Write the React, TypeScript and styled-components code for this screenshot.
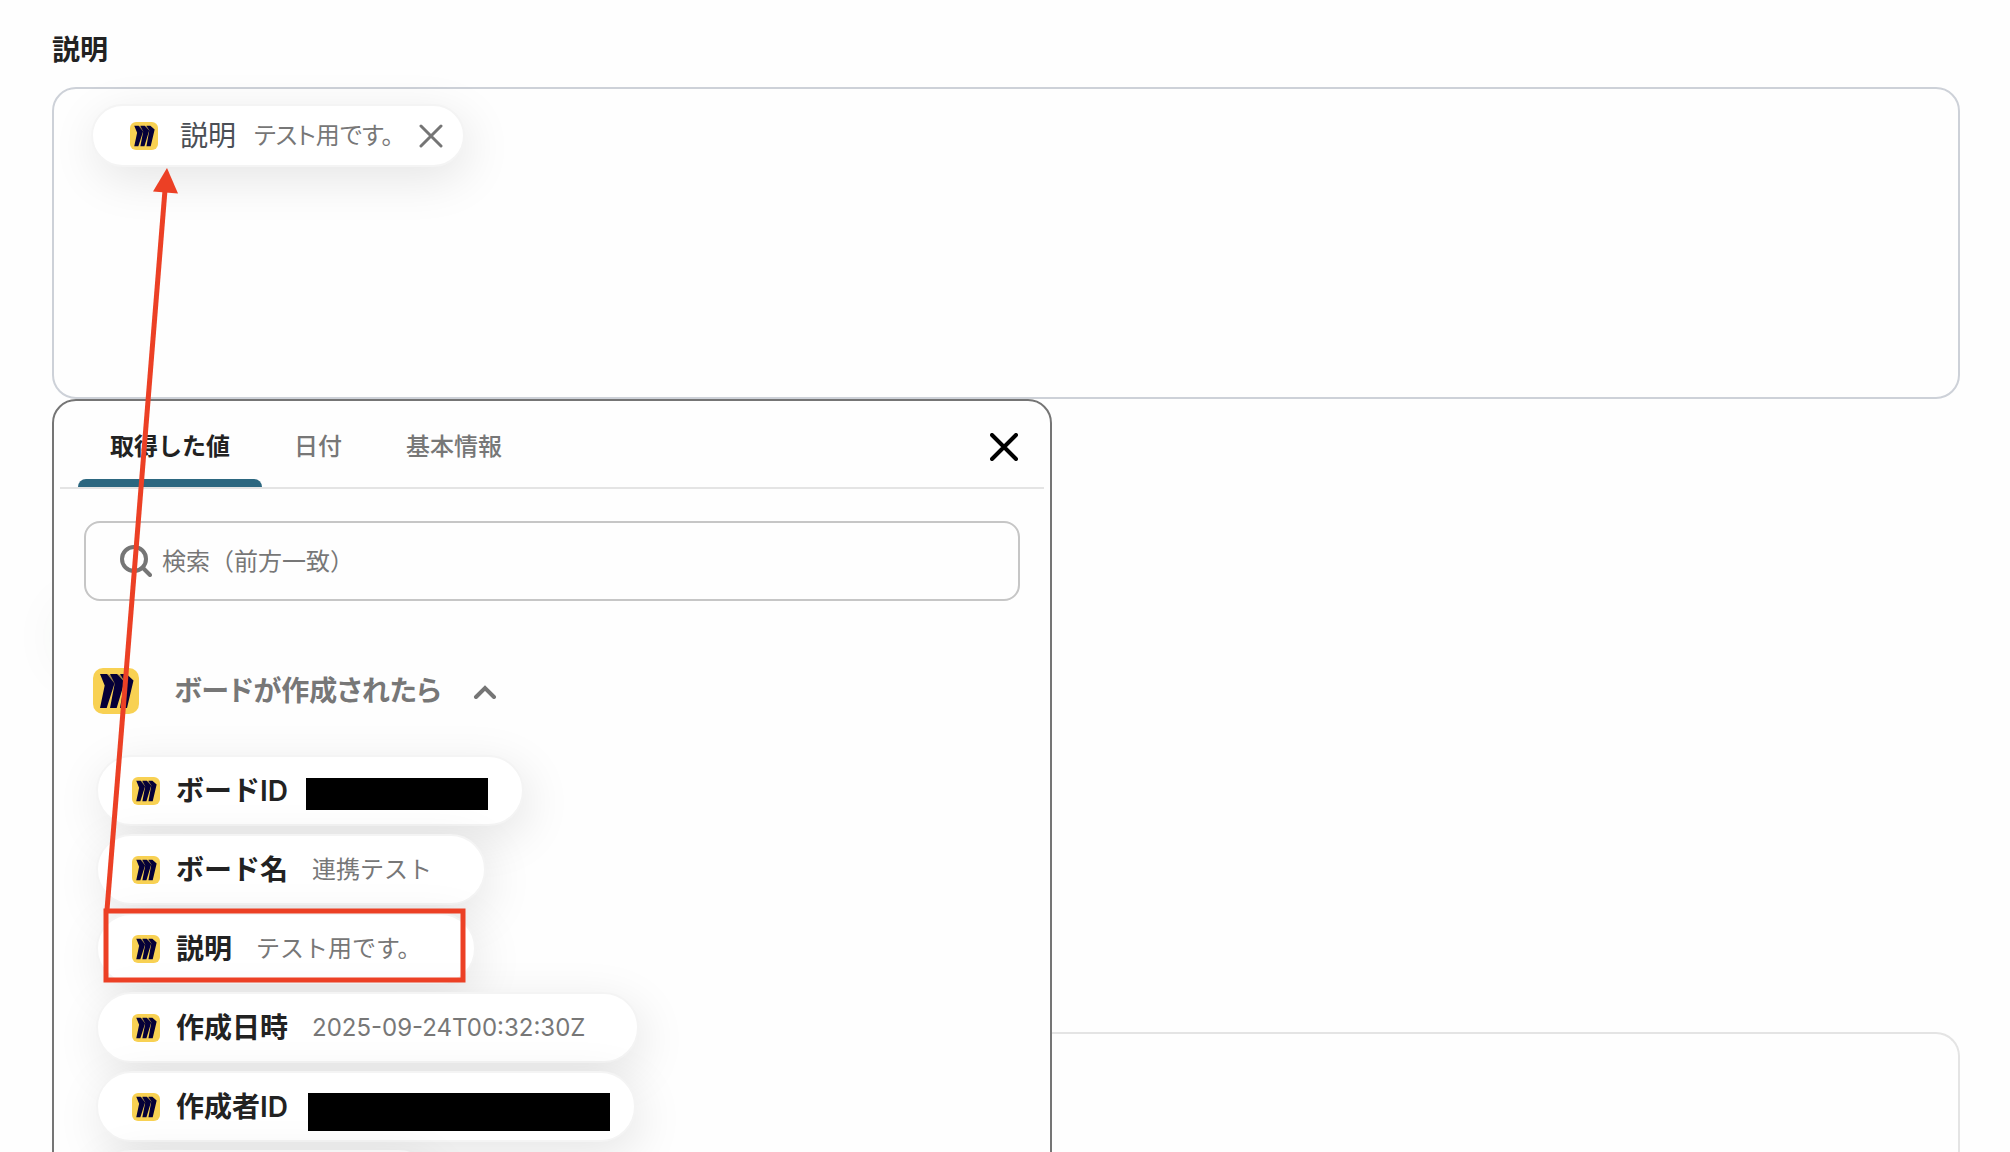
import React from "react";
import styled, { createGlobalStyle } from "styled-components";

const GlobalStyle = createGlobalStyle`
  *, *::before, *::after { box-sizing: border-box; }
  body {
    margin: 0;
    background: #fefefe;
    color: #222;
    font-family: Inter, "Noto Sans CJK JP", sans-serif;
    font-size: 24px;
    line-height: 36px;
  }
  button, input { font: inherit; color: inherit; }
`;

const Page = styled.main`
  position: relative;
  display: flex;
  flex-direction: column;
  height: 100vh;
  padding: 30px 50px 0 52px;
  overflow: hidden;
`;

const FieldLabel = styled.h2`
  margin: 0 0 17px;
  font-size: 28px;
  font-weight: 600;
  line-height: 40px;
`;

const FieldAnchor = styled.div`
  position: relative;

  &::before {
    content: "";
    position: absolute;
    top: calc(100% + 210px);
    left: 8px;
    width: 200px;
    height: 56px;
    border-radius: 28px;
    box-shadow: 0 0 56px rgba(40, 80, 70, 0.08);
  }
`;

const FieldBox = styled.div`
  display: flex;
  align-items: flex-start;
  min-height: 312px;
  padding: 15px 37px;
  border: 2px solid #cdd1d8;
  border-radius: 24px;
`;

const NextBox = styled.section`
  flex: 1 0 200px;
  margin-top: 633px;
  border: 2px solid #e4e4e4;
  border-bottom: 0;
  border-radius: 24px 24px 0 0;
`;

const SelectedChip = styled.div`
  display: flex;
  align-items: center;
  height: 63px;
  padding: 0 20px 0 37px;
  border: 2px solid #f4f4f4;
  border-radius: 32px;
  background: #fff;
  box-shadow: 4px 12px 48px rgba(0, 0, 0, 0.1);
`;

const SelectedName = styled.span`
  margin: 0 18px 0 22px;
  color: #4b4f56;
  font-size: 28px;
`;

const ChipValue = styled.span<{ $compact?: boolean }>`
  color: #777;
  font-feature-settings: ${(p) => (p.$compact ? '"palt"' : "normal")};
`;

const IconButton = styled.button`
  display: flex;
  padding: 0;
  border: 0;
  background: none;
  cursor: pointer;
`;

const RemoveButton = styled(IconButton)`
  margin-left: 26px;
`;

const Panel = styled.section`
  position: absolute;
  top: 100%;
  left: 0;
  width: 1000px;
  max-width: 100%;
  height: 100vh;
  padding: 0 6px;
  overflow: hidden;
  border: 2px solid #757575;
  border-radius: 24px 24px 0 0;
  background: #fefefe;
`;

const TabBar = styled.div`
  display: flex;
  align-items: center;
  height: 88px;
  padding: 6px 26px 0 18px;
  border-bottom: 2px solid #e4e4e4;
`;

const Tabs = styled.div`
  display: flex;
  flex: 1;
  align-self: stretch;
`;

const Tab = styled.button<{ $active?: boolean }>`
  position: relative;
  padding: 0 32px;
  border: 0;
  background: none;
  color: ${(p) => (p.$active ? "#222" : "#777")};
  font-weight: ${(p) => (p.$active ? 600 : 500)};
  cursor: pointer;

  &::after {
    content: "";
    position: absolute;
    inset: auto 0 0;
    height: 8px;
    border-radius: 8px 8px 0 0;
    background: ${(p) => (p.$active ? "#2c6780" : "transparent")};
  }
`;

const SearchBox = styled.label`
  display: flex;
  align-items: center;
  gap: 10px;
  height: 80px;
  margin: 32px 24px 0;
  padding: 0 34px;
  border: 2px solid #c6c6c6;
  border-radius: 16px;
`;

const SearchInput = styled.input`
  flex: 1;
  min-width: 0;
  padding: 2px 0 0;
  border: 0;
  outline: 0;
  background: none;

  &::placeholder { color: #777; opacity: 1; }
`;

const GroupHeader = styled.button`
  display: flex;
  align-items: center;
  margin: 67px 0 0 33px;
  padding: 0;
  border: 0;
  background: none;
  color: #777;
  font-size: 28px;
  font-weight: 600;
  cursor: pointer;
`;

const GroupTitle = styled.span`
  margin: 0 32px 0 35px;
  font-feature-settings: "palt";
`;

const ValueList = styled.ul`
  display: flex;
  flex-direction: column;
  align-items: flex-start;
  gap: 8px;
  margin: 41px 0 0 36px;
  padding: 0;
  list-style: none;
`;

const ValueChip = styled.button`
  display: flex;
  align-items: center;
  height: 71px;
  padding: 0 52px 0 34px;
  border: 2px solid #f4f4f4;
  border-radius: 36px;
  background: #fff;
  box-shadow: 4px 12px 48px rgba(0, 0, 0, 0.1);
  cursor: pointer;
`;

const ValueName = styled.span`
  margin: 0 24px 0 16px;
  font-size: 28px;
  font-weight: 600;
`;

const Redacted = styled.span<{ $slot: number; $bar: number; $tall?: boolean }>`
  position: relative;
  width: ${(p) => p.$slot}px;
  height: 36px;

  &::after {
    content: "";
    position: absolute;
    top: ${(p) => (p.$tall ? 4 : 5)}px;
    left: ${(p) => (p.$tall ? -4 : -6)}px;
    width: ${(p) => p.$bar}px;
    height: ${(p) => (p.$tall ? 38 : 32)}px;
    background: #000;
  }
`;

const Annotation = styled.svg`
  position: absolute;
  top: 0;
  left: 0;
  pointer-events: none;
`;

const MiroLogo = ({ size }: { size: number }) => (
  <svg width={size} height={size} viewBox="0 0 46 46" aria-hidden="true">
    <rect width="46" height="46" rx="10" fill="#f8d153" />
    <g fill="#050038">
      <path d="M7 6H14L21.500 15.500L13.700 40H7L11.700 17.500Z" />
      <path d="M17 6H24L31.500 14L23.700 40H17L21.700 15.500Z" />
      <path d="M27 6H33.500L40.500 12.500L34 40H27L31.700 13.500Z" />
      <path d="M13 6L22 8L22 17L17 12ZM23 6L32 8L32 15L27 11Z" opacity="0.35" />
    </g>
  </svg>
);

const Cross = ({ size, width, color }: { size: number; width: number; color: string }) => (
  <svg width={size} height={size} viewBox={`0 0 ${size} ${size}`} aria-hidden="true">
    <path
      d={`M2 2L${size - 2} ${size - 2}M${size - 2} 2L2 ${size - 2}`}
      stroke={color}
      strokeWidth={width}
      strokeLinecap="round"
    />
  </svg>
);

type Item = { name: string; value?: string; slot?: number; bar?: number; tall?: boolean };

const items: Item[] = [
  { name: "ボードID", slot: 158, bar: 182 },
  { name: "ボード名", value: "連携テスト" },
  { name: "説明", value: "テスト用です。" },
  { name: "作成日時", value: "2025-09-24T00:32:30Z" },
  { name: "作成者ID", slot: 270, bar: 302, tall: true },
];

export default function App() {
  return (
    <>
      <GlobalStyle />
      <Page>
        <FieldLabel id="description-label">説明</FieldLabel>
        <FieldAnchor>
          <FieldBox role="group" aria-labelledby="description-label">
            <SelectedChip>
              <MiroLogo size={28} />
              <SelectedName>説明</SelectedName>
              <ChipValue $compact>テスト用です。</ChipValue>
              <RemoveButton type="button" aria-label="削除">
                <Cross size={24} width={3} color="#757575" />
              </RemoveButton>
            </SelectedChip>
          </FieldBox>
          <Panel>
            <TabBar>
              <Tabs role="tablist">
                <Tab type="button" role="tab" aria-selected="true" $active>取得した値</Tab>
                <Tab type="button" role="tab" aria-selected="false">日付</Tab>
                <Tab type="button" role="tab" aria-selected="false">基本情報</Tab>
              </Tabs>
              <IconButton type="button" aria-label="閉じる">
                <Cross size={28} width={4} color="#000" />
              </IconButton>
            </TabBar>
            <SearchBox>
              <svg width="32" height="32" viewBox="0 0 32 32" fill="none" stroke="#757575" strokeWidth="4" aria-hidden="true">
                <circle cx="14" cy="14" r="12" />
                <path d="M22.5 22.5L30 30" strokeLinecap="round" />
              </svg>
              <SearchInput type="text" aria-label="検索" placeholder="検索（前方一致）" />
            </SearchBox>
            <GroupHeader type="button" aria-expanded="true">
              <MiroLogo size={46} />
              <GroupTitle>ボードが作成されたら</GroupTitle>
              <svg width="24" height="16" viewBox="0 0 24 16" fill="none" aria-hidden="true">
                <path d="M3 14L12 5L21 14" stroke="#757575" strokeWidth="4" strokeLinecap="round" />
              </svg>
            </GroupHeader>
            <ValueList>
              {items.map((item) => (
                <li key={item.name}>
                  <ValueChip type="button">
                    <MiroLogo size={28} />
                    <ValueName>{item.name}</ValueName>
                    {item.value ? (
                      <ChipValue>{item.value}</ChipValue>
                    ) : (
                      <Redacted $slot={item.slot ?? 0} $bar={item.bar ?? 0} $tall={item.tall} />
                    )}
                  </ValueChip>
                </li>
              ))}
              <li>
                <ValueChip type="button" aria-label="次の値">
                  <MiroLogo size={28} />
                  <Redacted $slot={220} $bar={0} />
                </ValueChip>
              </li>
            </ValueList>
          </Panel>
        </FieldAnchor>
        <NextBox />
        <Annotation width="480" height="1000" viewBox="0 0 480 1000" fill="none" aria-hidden="true">
          <path d="M107 910L165 190" stroke="#ec4025" strokeWidth="5" />
          <path d="M167 168L153 191.500L178 193.500Z" fill="#ec4025" />
          <rect x="106" y="911" width="357" height="69" stroke="#ec4025" strokeWidth="5" />
        </Annotation>
      </Page>
    </>
  );
}
